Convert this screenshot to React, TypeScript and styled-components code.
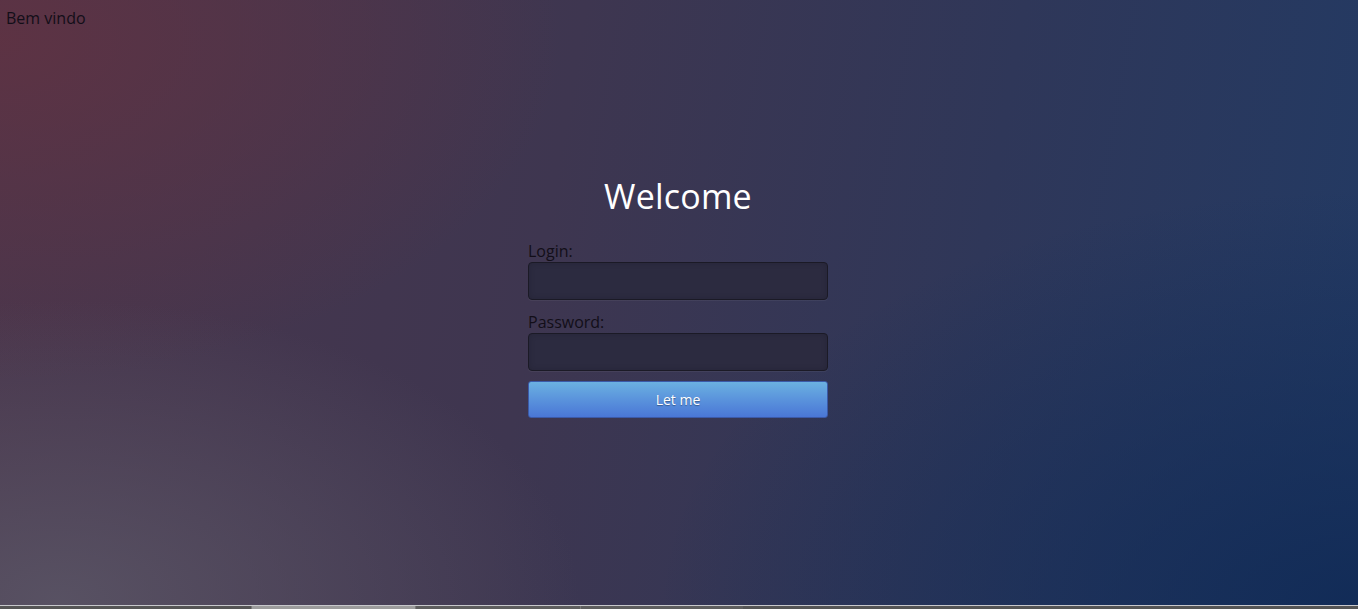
import React from 'react';
import styled, { createGlobalStyle } from 'styled-components';

const GlobalStyle = createGlobalStyle`
  html, body {
    margin: 0;
    padding: 0;
    height: 100%;
  }
  body {
    font-family: "Open Sans", "DejaVu Sans", sans-serif;
    overflow: hidden;
  }
  #root {
    height: 100%;
  }
`;

const Page = styled.div`
  height: 609px;
  display: flex;
  flex-direction: column;
  background:
    radial-gradient(ellipse 520px 300px at 60px 600px, rgba(92, 88, 104, 0.8), rgba(92, 88, 104, 0) 100%),
    radial-gradient(ellipse 560px 340px at 0px 40px, rgba(96, 50, 66, 0.85), rgba(96, 50, 66, 0) 100%),
    radial-gradient(ellipse 700px 420px at 1358px 609px, rgba(16, 42, 86, 0.9), rgba(16, 42, 86, 0) 100%),
    linear-gradient(100deg, #4a364c 0%, #3e3650 40%, #2f3759 70%, #223a64 100%);
`;

const Main = styled.main`
  flex: 1;
`;

const Greeting = styled.div`
  padding: 8px 0 0 6px;
  font-size: 16px;
  line-height: 20px;
  color: #120e18;
`;

const Center = styled.div`
  display: flex;
  flex-direction: column;
  align-items: center;
  padding: 147px 2px 0 0;
`;

const Title = styled.h1`
  margin: 0 0 24px;
  font-size: 34px;
  font-weight: 400;
  line-height: 42px;
  letter-spacing: 0.2px;
  color: #ffffff;
`;

const Form = styled.form`
  width: 300px;
  display: flex;
  flex-direction: column;
`;

const Label = styled.label`
  font-size: 16px;
  line-height: 20px;
  color: #120e18;
`;

const Field = styled.div`
  display: flex;
  flex-direction: column;
  margin-bottom: 12px;
`;

const Input = styled.input`
  box-sizing: border-box;
  width: 300px;
  height: 38px;
  margin-top: 1px;
  background: #2c2b40;
  border: 1px solid #1b1a26;
  border-radius: 4px;
  box-shadow: inset 0 0 6px rgba(0, 0, 0, 0.15), 0 1px 0 rgba(255, 255, 255, 0.05);
  color: #fff;
  font-family: inherit;
  font-size: 14px;
  padding: 0 10px;
  outline: none;
`;

const Button = styled.button`
  box-sizing: border-box;
  width: 300px;
  height: 37px;
  margin-top: -2px;
  border: 1px solid #3b5aa8;
  border-radius: 3px;
  background: linear-gradient(to bottom, #6bb1e1 0%, #5a93dc 50%, #4a77d6 100%);
  color: #ffffff;
  font-family: inherit;
  font-size: 14px;
  text-shadow: 0 1px 1px rgba(0, 0, 0, 0.35);
  cursor: pointer;
`;

const Taskbar = styled.div`
  height: 3px;
  border-top: 1px solid #c8c8cc;
  background: #555555;
  display: flex;
`;

const Slot = styled.div<{ $width: number; $active?: boolean; $gap?: boolean }>`
  width: ${(p) => p.$width}px;
  background: ${(p) => (p.$active ? '#9c9c9c' : p.$gap ? '#555555' : '#5e5e5e')};
  border-left: ${(p) => (p.$gap ? 'none' : '1px solid #777')};
`;

const App: React.FC = () => {
  return (
    <>
      <GlobalStyle />
      <Page>
        <Main>
          <Greeting>Bem vindo</Greeting>
          <Center>
            <Title>Welcome</Title>
            <Form onSubmit={(e) => e.preventDefault()}>
              <Field>
                <Label htmlFor="login">Login:</Label>
                <Input id="login" type="text" />
              </Field>
              <Field>
                <Label htmlFor="password">Password:</Label>
                <Input id="password" type="password" />
              </Field>
              <Button type="submit">Let me</Button>
            </Form>
          </Center>
        </Main>
        <Taskbar>
          <Slot $width={251} $gap />
          <Slot $width={163} $active />
          <Slot $width={164} />
          <Slot $width={162} />
        </Taskbar>
      </Page>
    </>
  );
};

export default App;
